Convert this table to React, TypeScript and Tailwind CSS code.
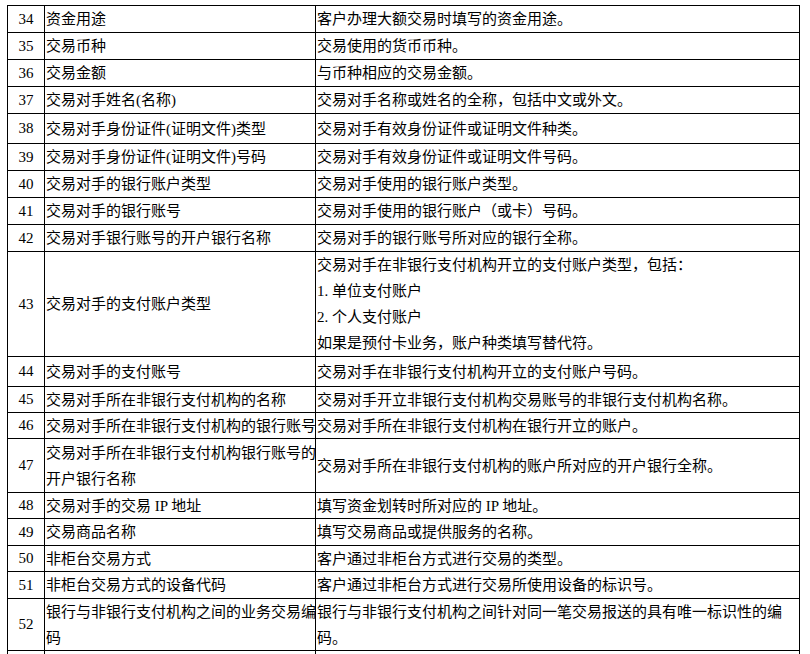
type Row = {
  no: string;
  name: string[];
  desc: string[];
  h: string;
};

const rows: Row[] = [
  { no: "34", name: ["资金用途"], desc: ["客户办理大额交易时填写的资金用途。"], h: "h-[27px]" },
  { no: "35", name: ["交易币种"], desc: ["交易使用的货币币种。"], h: "h-[27px]" },
  { no: "36", name: ["交易金额"], desc: ["与币种相应的交易金额。"], h: "h-[27px]" },
  { no: "37", name: ["交易对手姓名(名称)"], desc: ["交易对手名称或姓名的全称，包括中文或外文。"], h: "h-[27px]" },
  { no: "38", name: ["交易对手身份证件(证明文件)类型"], desc: ["交易对手有效身份证件或证明文件种类。"], h: "h-[30px]" },
  { no: "39", name: ["交易对手身份证件(证明文件)号码"], desc: ["交易对手有效身份证件或证明文件号码。"], h: "h-[27px]" },
  { no: "40", name: ["交易对手的银行账户类型"], desc: ["交易对手使用的银行账户类型。"], h: "h-[27px]" },
  { no: "41", name: ["交易对手的银行账号"], desc: ["交易对手使用的银行账户（或卡）号码。"], h: "h-[27px]" },
  { no: "42", name: ["交易对手银行账号的开户银行名称"], desc: ["交易对手的银行账号所对应的银行全称。"], h: "h-[27px]" },
  {
    no: "43",
    name: ["交易对手的支付账户类型"],
    desc: [
      "交易对手在非银行支付机构开立的支付账户类型，包括：",
      "1. 单位支付账户",
      "2. 个人支付账户",
      "如果是预付卡业务，账户种类填写替代符。",
    ],
    h: "h-[105px]",
  },
  { no: "44", name: ["交易对手的支付账号"], desc: ["交易对手在非银行支付机构开立的支付账户号码。"], h: "h-[30px]" },
  { no: "45", name: ["交易对手所在非银行支付机构的名称"], desc: ["交易对手开立非银行支付机构交易账号的非银行支付机构名称。"], h: "h-[26px]" },
  { no: "46", name: ["交易对手所在非银行支付机构的银行账号"], desc: ["交易对手所在非银行支付机构在银行开立的账户。"], h: "h-[26px]" },
  {
    no: "47",
    name: ["交易对手所在非银行支付机构银行账号的", "开户银行名称"],
    desc: ["交易对手所在非银行支付机构的账户所对应的开户银行全称。"],
    h: "h-[54px]",
  },
  { no: "48", name: ["交易对手的交易 IP 地址"], desc: ["填写资金划转时所对应的 IP 地址。"], h: "h-[26px]" },
  { no: "49", name: ["交易商品名称"], desc: ["填写交易商品或提供服务的名称。"], h: "h-[27px]" },
  { no: "50", name: ["非柜台交易方式"], desc: ["客户通过非柜台方式进行交易的类型。"], h: "h-[26px]" },
  { no: "51", name: ["非柜台交易方式的设备代码"], desc: ["客户通过非柜台方式进行交易所使用设备的标识号。"], h: "h-[27px]" },
  {
    no: "52",
    name: ["银行与非银行支付机构之间的业务交易编", "码"],
    desc: ["银行与非银行支付机构之间针对同一笔交易报送的具有唯一标识性的编", "码。"],
    h: "h-[52px]",
  },
  { no: "", name: [], desc: [], h: "h-[30px]" },
];

function Lines({ lines }: { lines: string[] }) {
  return (
    <div className="leading-[26px]">
      {lines.map((l, i) => (
        <div key={i} className="whitespace-nowrap">
          {l}
        </div>
      ))}
    </div>
  );
}

export default function App() {
  return (
    <div
      className="min-h-screen bg-white text-[15px] text-black pt-[5px] pl-[7px] overflow-hidden"
      style={{ fontFamily: '"Liberation Serif", "Noto Sans CJK SC", serif' }}
    >
      <div className="w-[793px] border-l border-t border-black">
        {rows.map((r, i) => (
          <div key={i} className={`flex border-b border-black ${r.h}`}>
            <div className="w-[37px] shrink-0 border-r border-black flex items-center justify-center">
              {r.no}
            </div>
            <div className="w-[271px] shrink-0 border-r border-black flex items-center pl-px">
              <Lines lines={r.name} />
            </div>
            <div className="w-[484px] shrink-0 border-r border-black flex items-center pl-px">
              <Lines lines={r.desc} />
            </div>
          </div>
        ))}
      </div>
    </div>
  );
}
